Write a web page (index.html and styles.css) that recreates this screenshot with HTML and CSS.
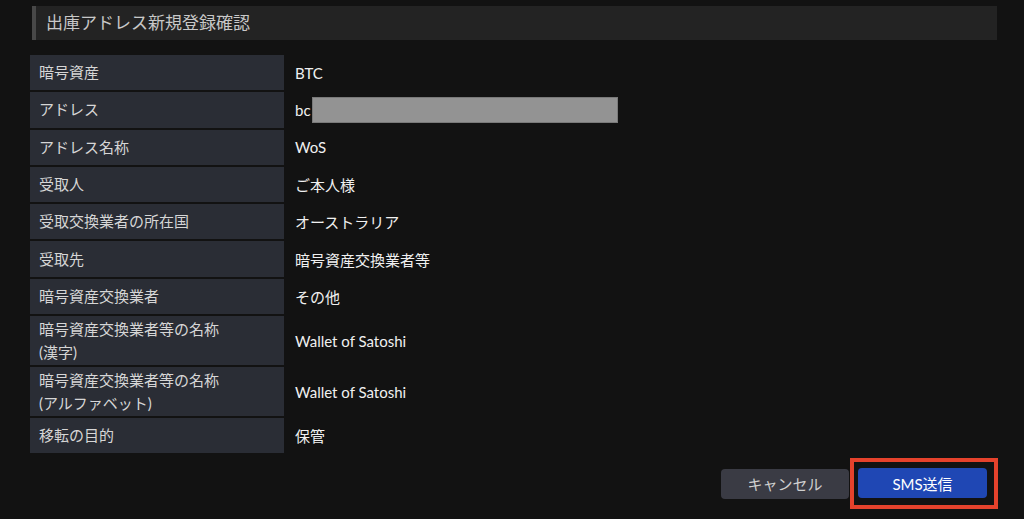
FILE: index.html
```html
<!DOCTYPE html>
<html lang="ja">
<head>
    <meta charset="UTF-8">
    <meta name="viewport" content="width=device-width, initial-scale=1.0">
    <title>出庫アドレス新規登録確認</title>
    <link rel="stylesheet" href="styles.css">
</head>
<body>
    <div class="page">
        <h2 class="title">出庫アドレス新規登録確認</h2>
        <div class="info">
            <div class="label">暗号資産</div>
            <div class="value">BTC</div>
            <div class="label">アドレス</div>
            <div class="value">bc<span class="masked"></span></div>
            <div class="label">アドレス名称</div>
            <div class="value">WoS</div>
            <div class="label">受取人</div>
            <div class="value">ご本人様</div>
            <div class="label">受取交換業者の所在国</div>
            <div class="value">オーストラリア</div>
            <div class="label">受取先</div>
            <div class="value">暗号資産交換業者等</div>
            <div class="label">暗号資産交換業者</div>
            <div class="value">その他</div>
            <div class="label tall">暗号資産交換業者等の名称<br>(漢字)</div>
            <div class="value">Wallet of Satoshi</div>
            <div class="label tall">暗号資産交換業者等の名称<br>(アルファベット)</div>
            <div class="value">Wallet of Satoshi</div>
            <div class="label">移転の目的</div>
            <div class="value">保管</div>
        </div>
        <div class="actions">
            <button class="btn cancel">キャンセル</button>
            <div class="highlight">
                <button class="btn send">SMS送信</button>
            </div>
        </div>
    </div>
</body>
</html>
```

FILE: styles.css
```css
body {
    margin: 0;
    background-color: #121212;
    font-family: Lato, "Noto Sans CJK JP", sans-serif;
    color: #e6e6e6;
}
.page {
    padding: 6px 26px 0 30px;
}
.title {
    margin: 0 1px 15px 2px;
    height: 34px;
    line-height: 34px;
    padding-left: 10px;
    border-left: 4px solid #484848;
    background-color: #232323;
    color: #c8c8c8;
    font-size: 17px;
    font-weight: normal;
}
.info {
    display: grid;
    grid-template-columns: 254px 1fr;
    row-gap: 2px;
    font-size: 15px;
}
.label {
    display: flex;
    align-items: center;
    height: 35.3px;
    padding-left: 9px;
    background-color: #2a2d35;
    color: #d6d6d6;
    line-height: 23px;
}
.label.tall {
    height: 49px;
}
.value {
    display: flex;
    align-items: center;
    padding-left: 11px;
    color: #f0f0f0;
}
.masked {
    display: inline-block;
    width: 304px;
    height: 24px;
    margin-left: 1px;
    background-color: #939393;
    border: 1px solid #7a7a7a;
}
.actions {
    display: flex;
    justify-content: flex-end;
    align-items: center;
    gap: 1px;
    margin-top: 5px;
}
.btn {
    display: block;
    width: 128px;
    height: 30px;
    border: none;
    border-radius: 4px;
    font-family: Lato, "Noto Sans CJK JP", sans-serif;
    font-size: 15px;
    cursor: pointer;
}
.cancel {
    background-color: #3a3b44;
    color: #cfcfcf;
}
.send {
    width: 129px;
    background-color: #1f47b4;
    color: #ffffff;
}
.highlight {
    padding: 6px 7px 7px 4px;
    border: 4px solid #e5422c;
}
```
